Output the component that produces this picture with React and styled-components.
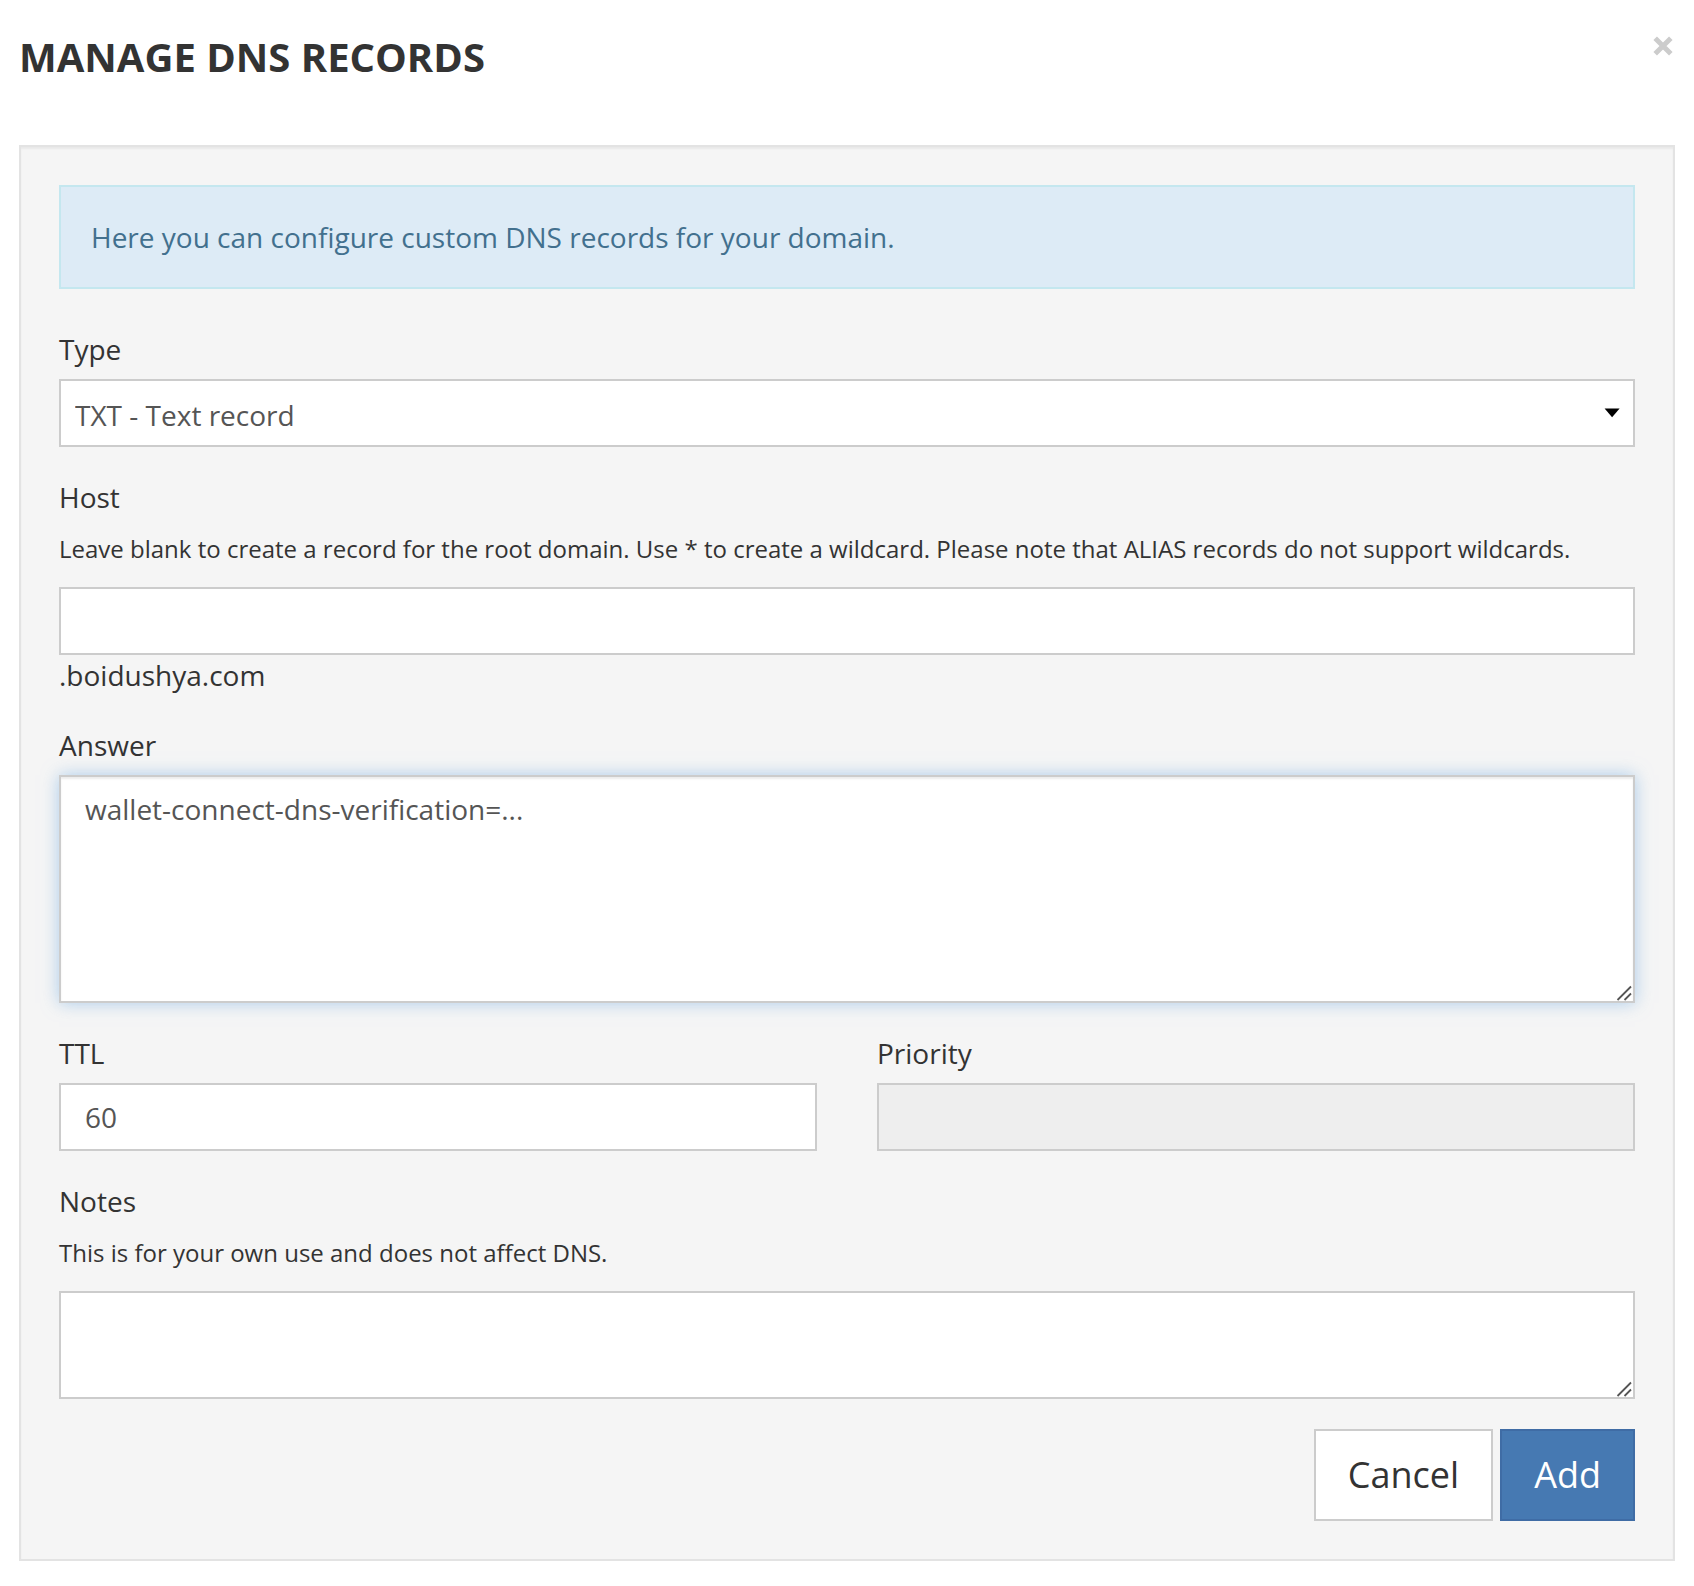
import React from "react";
import styled, { createGlobalStyle, css } from "styled-components";

const GlobalStyle = createGlobalStyle`
  *, *::before, *::after { box-sizing: border-box; }
  body {
    margin: 0;
    background: #fff;
    color: #333;
    font-family: "Open Sans", "Noto Sans", sans-serif;
    font-size: 28px;
    line-height: 40px;
  }
`;

const Dialog = styled.main`
  padding: 35px 19px 25px;
`;

const Header = styled.header`
  display: flex;
  justify-content: space-between;
  align-items: flex-start;
  margin-bottom: 66px;
`;

const Title = styled.h1`
  margin: 0;
  font-size: 40px;
  line-height: 44px;
  font-weight: 700;
  text-transform: uppercase;
`;

const CloseButton = styled.button`
  display: flex;
  padding: 1px 2px;
  border: 0;
  background: transparent;
  color: #ccc;
  cursor: pointer;
`;

const Panel = styled.form`
  padding: 38px;
  border: 2px solid #e3e3e3;
  background: #f5f5f5;
  box-shadow: inset 0 2px 2px rgba(0, 0, 0, 0.05);
`;

const Notice = styled.p`
  margin: 0 0 40px;
  padding: 30px;
  border: 2px solid #c4e7ef;
  background: #ddebf6;
  color: #42708e;
`;

const Field = styled.div`
  margin-bottom: 30px;
`;

const FieldRow = styled.div`
  display: grid;
  grid-template-columns: 1fr 1fr;
  column-gap: 60px;
`;

const Label = styled.label`
  display: block;
  margin-bottom: 10px;
`;

const Help = styled.p`
  margin: 0 0 16px;
  font-size: 24px;
  line-height: 44px;
`;

const Suffix = styled.div``;

const ControlFrame = styled.div`
  position: relative;
  display: flex;
`;

const control = css`
  display: block;
  width: 100%;
  margin: 0;
  border: 2px solid #ccc;
  border-radius: 0;
  outline: 0;
  background: #fff;
  color: #555;
  font-family: inherit;
  font-size: 28px;
  line-height: 40px;
`;

const Input = styled.input`
  ${control}
  height: 68px;
  padding: 12px 24px;

  &:disabled {
    background: #eee;
  }
`;

const Select = styled.select`
  ${control}
  height: 68px;
  padding: 14px 48px 10px 14px;
  appearance: none;
`;

const TextArea = styled.textarea`
  ${control}
  height: ${(p) => p.$height}px;
  padding: 12px 24px;
  resize: none;
  overflow: hidden;
  ${(p) =>
    p.$active &&
    css`
      box-shadow: inset 0 2px 2px rgba(0, 0, 0, 0.075), 0 0 16px rgba(122, 176, 228, 0.6);
    `}
`;

const Caret = styled.svg`
  position: absolute;
  top: 29px;
  right: 15px;
  pointer-events: none;
`;

const Grip = styled.svg`
  position: absolute;
  right: 3px;
  bottom: 2px;
  pointer-events: none;
`;

const Actions = styled.div`
  display: flex;
  justify-content: flex-end;
  gap: 7px;
`;

const Button = styled.button`
  padding: 20px 32px;
  border: 2px solid ${(p) => (p.$primary ? "#3f6ca5" : "#ccc")};
  background: ${(p) => (p.$primary ? "#4679b2" : "#fff")};
  color: ${(p) => (p.$primary ? "#fff" : "#333")};
  font-family: inherit;
  font-size: 36px;
  line-height: 48px;
  cursor: pointer;
`;

function ResizableText({ id, height, active, value, describedBy }) {
  return (
    <ControlFrame>
      <TextArea
        id={id}
        $height={height}
        $active={active}
        defaultValue={value}
        aria-describedby={describedBy}
        spellCheck={false}
      />
      <Grip width="16" height="16" viewBox="0 0 16 16" fill="none" stroke="#555" strokeWidth="1.8" aria-hidden="true">
        <path d="M1.5 15 15 1.5M8.5 15 15 8.5" />
      </Grip>
    </ControlFrame>
  );
}

export default function App() {
  return (
    <>
      <GlobalStyle />
      <Dialog>
        <Header>
          <Title>Manage DNS Records</Title>
          <CloseButton type="button" aria-label="Close">
            <svg width="20" height="20" viewBox="0 0 20 20" fill="none" stroke="currentColor" strokeWidth="5" aria-hidden="true">
              <path d="M2.2 2.2 17.8 17.8M17.8 2.2 2.2 17.8" />
            </svg>
          </CloseButton>
        </Header>
        <Panel onSubmit={(e) => e.preventDefault()}>
          <Notice>Here you can configure custom DNS records for your domain.</Notice>
          <Field>
            <Label htmlFor="type">Type</Label>
            <ControlFrame>
              <Select id="type" defaultValue="TXT">
                <option value="TXT">TXT - Text record</option>
              </Select>
              <Caret width="16" height="10" viewBox="0 0 16 10" aria-hidden="true">
                <path d="M.6 .5h15L8.1 9.3z" />
              </Caret>
            </ControlFrame>
          </Field>
          <Field>
            <Label htmlFor="host">Host</Label>
            <Help id="host-help">
              Leave blank to create a record for the root domain. Use * to create a wildcard. Please note that ALIAS
              records do not support wildcards.
            </Help>
            <Input id="host" type="text" aria-describedby="host-help" />
            <Suffix>.boidushya.com</Suffix>
          </Field>
          <Field>
            <Label htmlFor="answer">Answer</Label>
            <ResizableText id="answer" height={228} active value="wallet-connect-dns-verification=..." />
          </Field>
          <FieldRow>
            <Field>
              <Label htmlFor="ttl">TTL</Label>
              <Input id="ttl" type="text" defaultValue="60" />
            </Field>
            <Field>
              <Label htmlFor="priority">Priority</Label>
              <Input id="priority" type="text" disabled />
            </Field>
          </FieldRow>
          <Field>
            <Label htmlFor="notes">Notes</Label>
            <Help id="notes-help">This is for your own use and does not affect DNS.</Help>
            <ResizableText id="notes" height={108} describedBy="notes-help" />
          </Field>
          <Actions>
            <Button type="button">Cancel</Button>
            <Button type="submit" $primary>Add</Button>
          </Actions>
        </Panel>
      </Dialog>
    </>
  );
}
